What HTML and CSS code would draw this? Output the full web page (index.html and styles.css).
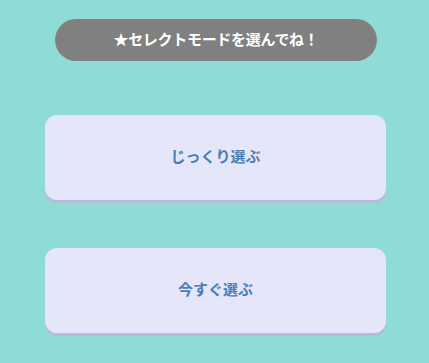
FILE: index.html
```html
<!DOCTYPE html>
<html lang="ja">
<head>
<meta charset="utf-8">
<link rel="stylesheet" href="styles.css">
</head>
<body>
<main class="page">
  <div class="title">★セレクトモードを選んでね！</div>
  <div class="choices">
    <button class="choice">じっくり選ぶ</button>
    <button class="choice">今すぐ選ぶ</button>
  </div>
</main>
</body>
</html>
```
FILE: styles.css
```css
html, body {
  margin: 0;
  padding: 0;
  background: #8fdbd5;
  width: 429px;
  height: 363px;
  overflow: hidden;
}
.page {
  display: flex;
  flex-direction: column;
  align-items: center;
  padding-top: 19px;
  font-family: "Noto Sans CJK JP", "Noto Sans", sans-serif;
  font-weight: 700;
}
.title {
  box-sizing: border-box;
  width: 322px;
  height: 42px;
  padding-bottom: 4px;
  margin-left: 3px;
  border-radius: 21px;
  background: #808080;
  color: #ffffff;
  font-size: 15px;
  display: flex;
  align-items: center;
  justify-content: center;
  letter-spacing: -0.3px;
}
.choices {
  display: flex;
  flex-direction: column;
  gap: 48px;
  margin-top: 54px;
  margin-left: 2px;
}
.choice {
  box-sizing: border-box;
  width: 341px;
  height: 85px;
  border: none;
  border-radius: 12px;
  background: #e6e6fa;
  box-shadow: 0 3px 0 #b3bddc;
  color: #4a7db5;
  font-family: inherit;
  font-weight: 700;
  font-size: 15px;
  padding: 0 0 5px 0;
  display: flex;
  align-items: center;
  justify-content: center;
}
```
